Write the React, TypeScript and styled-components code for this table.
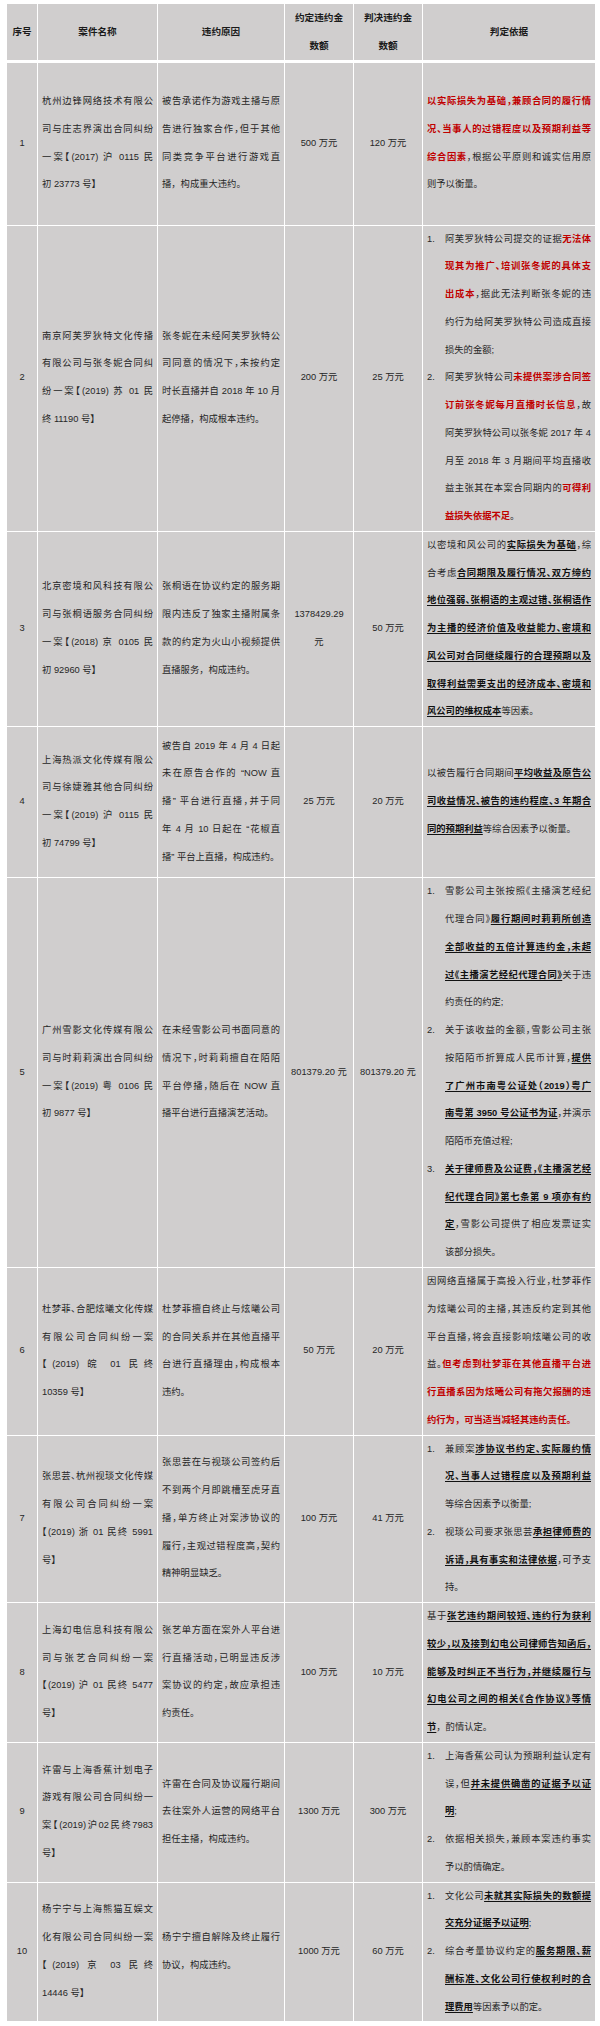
import React from 'react';
import styled, { createGlobalStyle } from 'styled-components';

const GlobalStyle = createGlobalStyle`
  html, body {
    margin: 0;
    padding: 0;
    background: #fff;
  }
  body {
    font-family: "Liberation Sans", "Noto Sans CJK SC", sans-serif;
    color: #262626;
  }
`;

const Sheet = styled.table`
  width: 589px;
  margin: 3px 0 0 6px;
  border-collapse: collapse;
  table-layout: fixed;
  background: #d0cece;
  font-size: 9.3px;
  line-height: 27.75px;
`;

const Col = styled.col<{ $w: number }>`
  width: ${(p) => p.$w}px;
`;

const Row = styled.tr<{ $h: number }>`
  height: ${(p) => p.$h}px;
`;

const HeadCell = styled.th`
  border: 1px solid #fff;
  border-bottom-width: 3px;
  padding: 0 2px;
  font-size: 9.6px;
  font-weight: 700;
  text-align: center;
  vertical-align: middle;
  color: #1a1a1a;
`;

const Cell = styled.td<{ $center?: boolean; $pad?: number }>`
  border: 1px solid #fff;
  padding: 0 ${(p) => p.$pad ?? 4}px;
  text-align: ${(p) => (p.$center ? 'center' : 'justify')};
  vertical-align: middle;
`;

// lines that are not the last of a paragraph are spread to the full width,
// with half-width punctuation so that the long ones still fit
const Line = styled.span<{ $last?: boolean }>`
  display: block;
  text-align: justify;
  text-align-last: ${(p) => (p.$last ? 'left' : 'justify')};
  font-feature-settings: ${(p) => (p.$last ? 'normal' : '"halt"')};
`;

const Plain = styled.span`
  display: block;
`;

const Red = styled.strong`
  color: #c00000;
  font-weight: 700;
`;

const Mark = styled.strong`
  color: #111;
  font-weight: 700;
  text-decoration: underline;
  text-decoration-thickness: 1px;
  text-underline-offset: 2px;
`;

const Point = styled.div`
  display: flex;
`;

const Num = styled.span`
  flex: 0 0 18px;
`;

const PointBody = styled.div`
  flex: 1;
  min-width: 0;
`;

// *红色加粗*  _加粗下划线_
const rich = (s: string) =>
  s
    .split(/(\*[^*]+\*|_[^_]+_)/)
    .filter(Boolean)
    .map((seg, i) => {
      if (seg.startsWith('*')) return <Red key={i}>{seg.slice(1, -1)}</Red>;
      if (seg.startsWith('_')) return <Mark key={i}>{seg.slice(1, -1)}</Mark>;
      return <React.Fragment key={i}>{seg}</React.Fragment>;
    });

const Para: React.FC<{ lines: string[] }> = ({ lines }) => (
  <>
    {lines.map((l, i) => (
      <Line key={i} $last={i === lines.length - 1}>
        {rich(l)}
      </Line>
    ))}
  </>
);

type Case = {
  h: number;
  name: string[];
  reason: string[];
  agreed: string[];
  judged: string[];
  basis?: string[];
  list?: string[][];
};

const cases: Case[] = [
  {
    h: 164,
    name: ['杭州边锋网络技术有限公', '司与庄志界演出合同纠纷', '一案【(2017) 沪 0115 民', '初 23773 号】'],
    reason: ['被告承诺作为游戏主播与原', '告进行独家合作，但于其他', '同类竞争平台进行游戏直', '播，构成重大违约。'],
    agreed: ['500 万元'],
    judged: ['120 万元'],
    basis: [
      '*以实际损失为基础，兼顾合同的履行情*',
      '*况、当事人的过错程度以及预期利益等*',
      '*综合因素*，根据公平原则和诚实信用原',
      '则予以衡量。',
    ],
  },
  {
    h: 305,
    name: ['南京阿芙罗狄特文化传播', '有限公司与张冬妮合同纠', '纷一案【(2019) 苏 01 民', '终 11190 号】'],
    reason: ['张冬妮在未经阿芙罗狄特公', '司同意的情况下，未按约定', '时长直播并自 2018 年 10 月', '起停播，构成根本违约。'],
    agreed: ['200 万元'],
    judged: ['25 万元'],
    list: [
      [
        '阿芙罗狄特公司提交的证据*无法体*',
        '*现其为推广、培训张冬妮的具体支*',
        '*出成本*，据此无法判断张冬妮的违',
        '约行为给阿芙罗狄特公司造成直接',
        '损失的金额;',
      ],
      [
        '阿芙罗狄特公司*未提供案涉合同签*',
        '*订前张冬妮每月直播时长信息*，故',
        '阿芙罗狄特公司以张冬妮 2017 年 4',
        '月至 2018 年 3 月期间平均直播收',
        '益主张其在本案合同期内的*可得利*',
        '*益损失依据不足*。',
      ],
    ],
  },
  {
    h: 194,
    name: ['北京密境和风科技有限公', '司与张桐语服务合同纠纷', '一案【(2018) 京 0105 民', '初 92960 号】'],
    reason: ['张桐语在协议约定的服务期', '限内违反了独家主播附属条', '款的约定为火山小视频提供', '直播服务，构成违约。'],
    agreed: ['1378429.29', '元'],
    judged: ['50 万元'],
    basis: [
      '以密境和风公司的_实际损失为基础_，综',
      '合考虑_合同期限及履行情况、双方缔约_',
      '_地位强弱、张桐语的主观过错、张桐语作_',
      '_为主播的经济价值及收益能力、密境和_',
      '_风公司对合同继续履行的合理预期以及_',
      '_取得利益需要支出的经济成本、密境和_',
      '_风公司的维权成本_等因素。',
    ],
  },
  {
    h: 151,
    name: ['上海热派文化传媒有限公', '司与徐婕雅其他合同纠纷', '一案【(2019) 沪 0115 民', '初 74799 号】'],
    reason: [
      '被告自 2019 年 4 月 4 日起',
      '未在原告合作的 “NOW 直',
      '播” 平台进行直播，并于同',
      '年 4 月 10 日起在 “花椒直',
      '播” 平台上直播，构成违约。',
    ],
    agreed: ['25 万元'],
    judged: ['20 万元'],
    basis: [
      '以被告履行合同期间_平均收益及原告公_',
      '_司收益情况、被告的违约程度、3 年期合_',
      '_同的预期利益_等综合因素予以衡量。',
    ],
  },
  {
    h: 390,
    name: ['广州雪影文化传媒有限公', '司与时莉莉演出合同纠纷', '一案【(2019) 粤 0106 民', '初 9877 号】'],
    reason: ['在未经雪影公司书面同意的', '情况下，时莉莉擅自在陌陌', '平台停播，随后在 NOW 直', '播平台进行直播演艺活动。'],
    agreed: ['801379.20 元'],
    judged: ['801379.20 元'],
    list: [
      [
        '雪影公司主张按照《主播演艺经纪',
        '代理合同》_履行期间时莉莉所创造_',
        '_全部收益的五倍计算违约金，未超_',
        '_过《主播演艺经纪代理合同》_关于违',
        '约责任的约定;',
      ],
      [
        '关于该收益的金额，雪影公司主张',
        '按陌陌币折算成人民币计算，_提供_',
        '_了广州市南粤公证处（2019）粤广_',
        '_南粤第 3950 号公证书为证_，并演示',
        '陌陌币充值过程;',
      ],
      [
        '_关于律师费及公证费，《主播演艺经_',
        '_纪代理合同》第七条第 9 项亦有约_',
        '_定_，雪影公司提供了相应发票证实',
        '该部分损失。',
      ],
    ],
  },
  {
    h: 166,
    name: ['杜梦菲、合肥炫曦文化传媒', '有限公司合同纠纷一案', '【(2019) 皖 01 民终', '10359 号】'],
    reason: ['杜梦菲擅自终止与炫曦公司', '的合同关系并在其他直播平', '台进行直播理由，构成根本', '违约。'],
    agreed: ['50 万元'],
    judged: ['20 万元'],
    basis: [
      '因网络直播属于高投入行业，杜梦菲作',
      '为炫曦公司的主播，其违反约定到其他',
      '平台直播，将会直接影响炫曦公司的收',
      '益。*但考虑到杜梦菲在其他直播平台进*',
      '*行直播系因为炫曦公司有拖欠报酬的违*',
      '*约行为，可当适当减轻其违约责任。*',
    ],
  },
  {
    h: 167,
    name: ['张思芸、杭州视琰文化传媒', '有限公司合同纠纷一案', '【(2019) 浙 01 民终 5991', '号】'],
    reason: ['张思芸在与视琰公司签约后', '不到两个月即跳槽至虎牙直', '播，单方终止对案涉协议的', '履行，主观过错程度高，契约', '精神明显缺乏。'],
    agreed: ['100 万元'],
    judged: ['41 万元'],
    list: [
      ['兼顾案_涉协议书约定、实际履约情_', '_况、当事人过错程度以及预期利益_', '等综合因素予以衡量;'],
      ['视琰公司要求张思芸_承担律师费的_', '_诉请，具有事实和法律依据_，可予支', '持。'],
    ],
  },
  {
    h: 139,
    name: ['上海幻电信息科技有限公', '司与张艺合同纠纷一案', '【(2019) 沪 01 民终 5477', '号】'],
    reason: ['张艺单方面在案外人平台进', '行直播活动，已明显违反涉', '案协议的约定，故应承担违', '约责任。'],
    agreed: ['100 万元'],
    judged: ['10 万元'],
    basis: [
      '基于_张艺违约期间较短、违约行为获利_',
      '_较少，以及接到幻电公司律师告知函后，_',
      '_能够及时纠正不当行为，并继续履行与_',
      '_幻电公司之间的相关《合作协议》等情_',
      '_节_，酌情认定。',
    ],
  },
  {
    h: 138,
    name: ['许雷与上海香蕉计划电子', '游戏有限公司合同纠纷一', '案【(2019)沪02民终7983', '号】'],
    reason: ['许雷在合同及协议履行期间', '去往案外人运营的网络平台', '担任主播，构成违约。'],
    agreed: ['1300 万元'],
    judged: ['300 万元'],
    list: [
      ['上海香蕉公司认为预期利益认定有', '误，但_并未提供确凿的证据予以证_', '_明_;'],
      ['依据相关损失，兼顾本案违约事实', '予以酌情确定。'],
    ],
  },
  {
    h: 139,
    name: ['杨宁宁与上海熊猫互娱文', '化有限公司合同纠纷一案', '【(2019) 京 03 民终', '14446 号】'],
    reason: ['杨宁宁擅自解除及终止履行', '协议，构成违约。'],
    agreed: ['1000 万元'],
    judged: ['60 万元'],
    list: [
      ['文化公司_未就其实际损失的数额提_', '_交充分证据予以证明_;'],
      ['综合考量协议约定的_服务期限、薪_', '_酬标准、文化公司行使权利时的合_', '_理费用_等因素予以酌定。'],
    ],
  },
];

const Amount: React.FC<{ lines: string[] }> = ({ lines }) => (
  <>
    {lines.map((l, i) => (
      <Plain key={i}>{l}</Plain>
    ))}
  </>
);

const App: React.FC = () => {
  return (
    <>
      <GlobalStyle />
      <Sheet>
        <colgroup>
          <Col $w={31} />
          <Col $w={120} />
          <Col $w={127} />
          <Col $w={69} />
          <Col $w={69} />
          <Col $w={173} />
        </colgroup>
        <thead>
          <Row $h={54}>
            <HeadCell>序号</HeadCell>
            <HeadCell>案件名称</HeadCell>
            <HeadCell>违约原因</HeadCell>
            <HeadCell>
              约定违约金
              <br />
              数额
            </HeadCell>
            <HeadCell>
              判决违约金
              <br />
              数额
            </HeadCell>
            <HeadCell>判定依据</HeadCell>
          </Row>
        </thead>
        <tbody>
          {cases.map((c, i) => (
            <Row key={i} $h={c.h}>
              <Cell $center $pad={1}>
                {i + 1}
              </Cell>
              <Cell>
                <Para lines={c.name} />
              </Cell>
              <Cell>
                <Para lines={c.reason} />
              </Cell>
              <Cell $center $pad={1}>
                <Amount lines={c.agreed} />
              </Cell>
              <Cell $center $pad={1}>
                <Amount lines={c.judged} />
              </Cell>
              <Cell>
                {c.basis && <Para lines={c.basis} />}
                {c.list &&
                  c.list.map((item, k) => (
                    <Point key={k}>
                      <Num>{k + 1}.</Num>
                      <PointBody>
                        <Para lines={item} />
                      </PointBody>
                    </Point>
                  ))}
              </Cell>
            </Row>
          ))}
        </tbody>
      </Sheet>
    </>
  );
};

export default App;
